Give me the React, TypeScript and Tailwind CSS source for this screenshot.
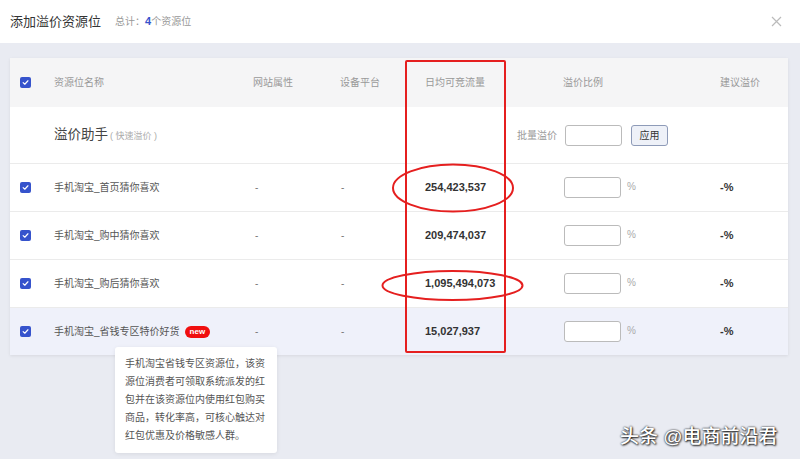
import React from 'react'

const font = { fontFamily: '"Liberation Sans", "Noto Sans CJK SC", sans-serif' }

function Check() {
  return (
    <div className="w-[11px] h-[11px] rounded-[2px] bg-[#3653cc] flex items-center justify-center">
      <svg width="7" height="7" viewBox="0 0 8 8" fill="none">
        <path d="M1.3 4.2 L3.2 6 L6.8 2" stroke="#fff" strokeWidth="1.3" strokeLinecap="round" strokeLinejoin="round" />
      </svg>
    </div>
  )
}

const rows = [
  { name: '手机淘宝_首页猜你喜欢', flow: '254,423,537' },
  { name: '手机淘宝_购中猜你喜欢', flow: '209,474,037' },
  { name: '手机淘宝_购后猜你喜欢', flow: '1,095,494,073' },
  { name: '手机淘宝_省钱专区特价好货', flow: '15,027,937', isNew: true },
]

const cols = 'grid grid-cols-[44px_199px_87px_85px_138px_157px_68px] items-center'

export default function App() {
  return (
    <div className="relative w-[800px] h-[459px] overflow-hidden bg-[#e9ebf2]" style={font}>
      {/* Header */}
      <div className="h-[43px] bg-white flex items-center px-[10px]">
        <div className="text-[13px] text-[#333]">添加溢价资源位</div>
        <div className="ml-[14px] text-[10px] text-[#999] flex items-center">
          总计：<span className="text-[#3653cc] font-bold text-[11px]">4</span>个资源位
        </div>
        <div className="ml-auto mr-[8px]">
          <svg width="11" height="11" viewBox="0 0 11 11">
            <path d="M1 1 L10 10 M10 1 L1 10" stroke="#bbb" strokeWidth="1.2" />
          </svg>
        </div>
      </div>

      {/* Table card */}
      <div className="mt-[15px] ml-[10px] w-[778px] bg-white shadow-[0_1px_3px_rgba(0,0,0,0.08)]">
        <div className={`${cols} h-[49px] bg-[#f5f5f6] text-[10px] text-[#999]`}>
          <div className="pl-[10px]"><Check /></div>
          <div>资源位名称</div>
          <div>网站属性</div>
          <div>设备平台</div>
          <div>日均可竞流量</div>
          <div>溢价比例</div>
          <div>建议溢价</div>
        </div>

        <div className="grid grid-cols-[44px_463px_auto] items-center h-[56px]">
          <div />
          <div className="flex items-baseline text-[#444]">
            <span className="text-[13.5px]">溢价助手</span>
            <span className="text-[9px] text-[#aaa] ml-[2px]">( 快速溢价 )</span>
          </div>
          <div className="flex items-center">
            <span className="text-[10px] text-[#999]">批量溢价</span>
            <div className="ml-[8px] w-[57px] h-[21px] border border-[#bbb] rounded-[3px] bg-white" />
            <div className="ml-[9px] w-[37px] h-[21px] border border-[#8e9bb8] rounded-[3px] bg-[#eef1f8] flex items-center justify-center text-[10px] text-[#333]">
              应用
            </div>
          </div>
        </div>

        {rows.map(r => (
          <div key={r.name} className={`${cols} h-[48px] border-t border-[#ebebeb] ${r.isNew ? 'bg-[#eff1fa]' : ''}`}>
            <div className="pl-[10px]"><Check /></div>
            <div className="flex items-center text-[10px] text-[#555]">
              {r.name}
              {r.isNew && (
                <span className="ml-[5px] h-[12px] px-[5px] rounded-full bg-[#f00f0f] text-white text-[8px] font-bold leading-[12px]">new</span>
              )}
            </div>
            <div className="pl-[2px] text-[10px] text-[#777]">-</div>
            <div className="pl-[1px] text-[10px] text-[#777]">-</div>
            <div className="text-[11px] font-bold text-[#333]">{r.flow}</div>
            <div className="flex items-center pl-[1px]">
              <div className="w-[57px] h-[21px] border border-[#bbb] rounded-[3px] bg-white" />
              <span className="ml-[6px] text-[10px] text-[#aaa] -mt-[3px]">%</span>
            </div>
            <div className="text-[11px] font-bold text-[#333]">-%</div>
          </div>
        ))}
      </div>

      {/* Red annotations */}
      <div className="absolute left-[405px] top-[60px] w-[101px] h-[293px] border-2 border-[#e51f1f] rounded-[2px] pointer-events-none" />
      <svg className="absolute left-0 top-0 pointer-events-none" width="800" height="459">
        <ellipse cx="453" cy="188" rx="60" ry="23.5" fill="none" stroke="#e51f1f" strokeWidth="2" />
        <ellipse cx="452.5" cy="285.5" rx="70" ry="14.5" fill="none" stroke="#e51f1f" strokeWidth="2" />
      </svg>

      {/* Tooltip */}
      <div className="absolute left-[115px] top-[347px] w-[162px] bg-white rounded-[3px] shadow-[0_1px_4px_rgba(0,0,0,0.08)] px-[10px] py-[8px] text-[10px] leading-[18px] text-[#555]">
        手机淘宝省钱专区资源位，该资源位消费者可领取系统派发的红包并在该资源位内使用红包购买商品，转化率高，可核心触达对红包优惠及价格敏感人群。
      </div>

      {/* Watermark */}
      <div className="absolute left-[620px] top-[423px] text-[19px] font-medium text-white [text-shadow:0_0_2px_#000,1px_1px_2px_rgba(0,0,0,0.8)] whitespace-nowrap">
        头条 @电商前沿君
      </div>
    </div>
  )
}
